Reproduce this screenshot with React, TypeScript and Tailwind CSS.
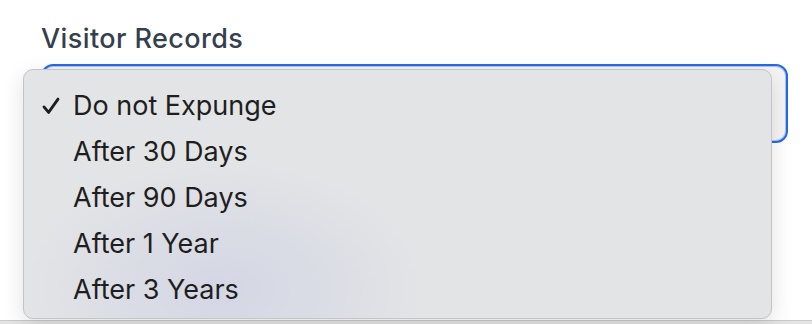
import React from "react"

const options = ["Do not Expunge", "After 30 Days", "After 90 Days", "After 1 Year", "After 3 Years"]

function Check() {
  return (
    <svg width="18" height="18" viewBox="0 0 18 18" className="absolute left-[18px] top-1/2 -translate-y-[45%]">
      <path d="M2 10 L6.6 15.5 L16 2.2" fill="none" stroke="#1d1d1f" strokeWidth="2.8" strokeLinecap="round" strokeLinejoin="round" />
    </svg>
  )
}

export default function App() {
  const selected = options[0]

  return (
    <div className="relative flex h-[324px] w-[812px] flex-col overflow-hidden bg-white font-['Inter',sans-serif]">
      <div className="flex-1 pl-[41px] pt-[23px]">
        <label className="block text-[27px] font-medium leading-[32px] tracking-[0.015em] text-[#363f4d]">Visitor Records</label>
        <div className="mt-[9px] h-[79px] w-[747px] rounded-[12px] border-2 border-[#2869e4] bg-[#f4f4f5] shadow-[inset_0_0_0_1px_#a8c3f3]" />
      </div>
      <div className="h-[4px] border-t border-[#c9c9c9] bg-[#e4e4e4]" />

      <div className="absolute left-[23px] top-[69px] h-[250px] w-[749px] rounded-[10px] border border-[#c4c4c6] bg-[#e3e4e6] bg-[radial-gradient(ellipse_200px_130px_at_200px_220px,#d4d7e4_0%,#dadce5_45%,#e3e4e6_100%)] pt-[12px] pb-[8px] shadow-[0_6px_22px_rgba(0,0,0,0.12)]">
        {options.map((o) => (
          <div key={o} className="relative flex h-[46px] items-center pl-[49px] text-[27px] leading-none text-[#1e1e20]">
            {o === selected && <Check />}
            {o}
          </div>
        ))}
      </div>
    </div>
  )
}
